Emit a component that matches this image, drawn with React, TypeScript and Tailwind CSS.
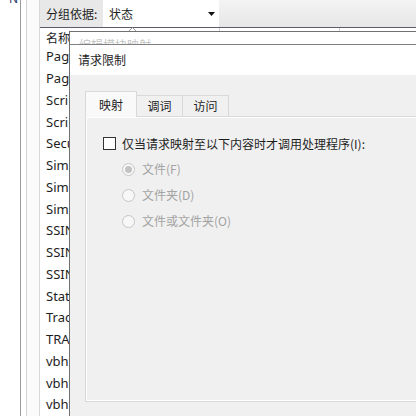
import React from "react";

const rows = ["Pag", "Pag", "Scri", "Scri", "Secu", "Sim", "Sim", "Sim", "SSIN", "SSIN", "SSIN", "Stat", "Trac", "TRA", "vbht", "vbht", "vbht"];

const cjk = { fontFamily: '"Noto Sans CJK SC", "Noto Sans", sans-serif' };
const latin = { fontFamily: '"Noto Sans", "Noto Sans CJK SC", sans-serif' };

function Radio({ label, checked }: { label: string; checked?: boolean }) {
  return (
    <div className="flex h-[26px] items-center gap-[7px]">
      <span className="flex h-[13px] w-[13px] items-center justify-center rounded-full border border-[#c6c6c6] bg-[#f7f7f7]">
        {checked && <span className="h-[7px] w-[7px] rounded-full bg-[#c2c2c2]" />}
      </span>
      <span className="text-[12px] leading-none text-[#a3a3a3]">{label}</span>
    </div>
  );
}

export default function App() {
  return (
    <div className="relative flex h-[416px] w-[416px] overflow-hidden bg-white text-[#1e1e1e]" style={cjk}>
      {/* left strips */}
      <div className="relative w-[21px] border-r border-[#9a9a9a] bg-white">
        <span className="absolute -top-[10px] left-[9px] text-[12px] text-[#2a3a6a]" style={latin}>N</span>
      </div>
      <div className="w-[6px] border-r border-[#d4d4d4] bg-white" />
      <div className="w-[13px] border-r border-[#d9d9d9] bg-[#fbfbfb]" />

      {/* main list view */}
      <div className="flex flex-1 flex-col">
        <div className="flex h-[27px] items-stretch bg-gradient-to-b from-[#f4f4f4] to-[#e6e6e6]">
          <div className="flex w-[63px] items-center bg-[#e8e8e8] pl-[6px] text-[12px]">分组依据:</div>
          <div className="flex w-[116px] items-center justify-between bg-white pl-[6px] pr-[4px] text-[12px]">
            <span>状态</span>
            <svg width="7" height="4" viewBox="0 0 7 4"><path d="M0 0h7L3.5 4z" fill="#111" /></svg>
          </div>
        </div>
        <div className="relative h-[18px] border-t border-[#5c5c6e] bg-white">
          <span className="absolute left-[6px] top-[4px] text-[12px] leading-none">名称</span>
          <svg className="absolute left-[88px] -top-[1px]" width="9" height="5" viewBox="0 0 9 5">
            <path d="M0.5 4.5L4.5 0.5L8.5 4.5" fill="none" stroke="#9a9a9a" />
          </svg>
          <div className="absolute left-[179px] top-0 h-[4px] border-l border-[#d0d0d0]" />
          <div className="absolute left-[299px] top-0 h-[4px] border-l border-[#d0d0d0]" />
        </div>
        <div className="flex flex-col pl-[6px] pt-[1px]" style={latin}>
          {rows.map((r, i) => (
            <div key={i} className="flex h-[21.75px] items-center text-[13px] leading-none">{r}</div>
          ))}
        </div>
      </div>

      {/* parent dialog, inactive */}
      <div className="absolute left-[69px] top-[31px] right-0 bottom-0 flex flex-col border-l border-t border-[#707070] bg-white">
        <div className="h-[12px] overflow-hidden pl-[9px] text-[12px] leading-none text-[#c4c4c4]">
          <div className="pt-[7px]">编辑模块映射</div>
        </div>

        {/* child dialog */}
        <div className="flex flex-1 flex-col border-t border-[#808080]">
          <div className="flex h-[30px] items-center bg-white pl-[8px] text-[12px]">请求限制</div>
          <div className="flex flex-1 flex-col bg-[#f0f0f0] pl-[15px] pt-[16px]">
            <div className="flex items-end">
              <div className="relative z-10 -mb-px flex h-[26px] w-[52px] items-center justify-center border border-b-0 border-[#d9d9d9] bg-[#f9f9f9] text-[12px]">映射</div>
              <div className="flex h-[21px] w-[46px] items-center justify-center border-t border-r border-[#d9d9d9] bg-[#f0f0f0] text-[12px]">调词</div>
              <div className="flex h-[21px] w-[46px] items-center justify-center border-t border-r border-[#d9d9d9] bg-[#f0f0f0] text-[12px]">访问</div>
            </div>
            <div className="mb-[14px] flex-1 border border-r-0 border-[#d9d9d9] bg-[#f9f9f9]">
              <div className="h-full border-b border-l border-t border-white bg-[#f0f0f0] pl-[16px] pt-[19px]">
                <div className="flex items-center gap-[6px]">
                  <span className="h-[13px] w-[13px] border border-[#333] bg-white" />
                  <span className="text-[12px] leading-none">仅当请求映射至以下内容时才调用处理程序(I):</span>
                </div>
                <div className="mt-[6px] flex flex-col pl-[19px]">
                  <Radio label="文件(F)" checked />
                  <Radio label="文件夹(D)" />
                  <Radio label="文件或文件夹(O)" />
                </div>
              </div>
            </div>
          </div>
        </div>
      </div>
    </div>
  );
}
